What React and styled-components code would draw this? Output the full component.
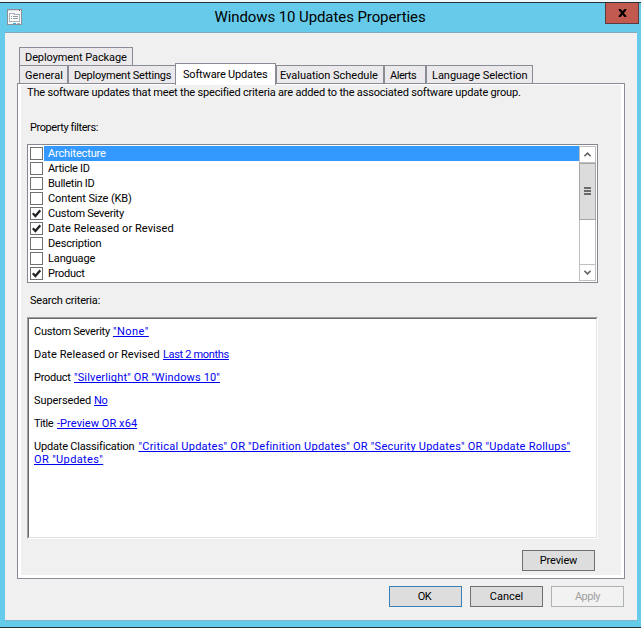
import React from 'react';
import styled, { createGlobalStyle } from 'styled-components';

const Global = createGlobalStyle`
  * { box-sizing: border-box; }
  body { margin: 0; background: #fff; }
`;

const Dialog = styled.div`
  width: 641px;
  height: 628px;
  background: #66cbea;
  border-top: 2px solid #f0f7fa;
  border-bottom: 1px solid #263238;
  font: 11px/13px Roboto, "Liberation Sans", sans-serif;
  color: #000;
  display: flex;
  flex-direction: column;
`;

const TitleBar = styled.header`
  height: 30px;
  flex: none;
  border-top: 1px solid #263238;
  padding: 0 2px 0 7px;
  display: grid;
  grid-template-columns: 28px 1fr 34px;
  align-items: start;
`;

const AppIcon = styled.svg`
  display: block;
  margin-top: 6px;
`;

const Title = styled.h1`
  margin: 5px 0 0;
  font-size: 15px;
  font-weight: 400;
  line-height: 19px;
  letter-spacing: -0.087px;
  text-align: center;
`;

const CloseButton = styled.button`
  width: 34px;
  height: 21px;
  padding: 0;
  border: 1px solid #5c3b40;
  border-top: 0;
  background: #c35a50;
  display: grid;
  place-items: center;
`;

const Client = styled.main`
  margin: 0 4px 0 5px;
  height: 589px;
  background: #f0f0f0;
  border-top: 1px solid #7fa9bd;
  border-bottom: 1px solid #7fb4cc;
  padding: 14px 12px 0;
`;

const TabRow = styled.div`
  display: flex;
  align-items: flex-end;
  height: 18px;
  margin-left: 2px;
`;

const Tab = styled.div`
  flex: none;
  width: ${p => p.$w}px;
  height: ${p => (p.$active ? 22 : 18)}px;
  margin: ${p => (p.$active ? '0 0 -2px -1px' : '0')};
  padding: ${p => (p.$active ? '4px 0 0' : '3px 0 0')} ${p => p.$pad ?? 5}px;
  background: ${p => (p.$active ? '#fff' : '#ebe9eb')};
  border: 1px solid #898c95;
  border-bottom: 0;
  position: relative;
  z-index: ${p => (p.$active ? 1 : 0)};
  white-space: nowrap;
  letter-spacing: ${p => p.$ls}px;
`;

const Panel = styled.section`
  width: 608px;
  height: 496px;
  border: 1px solid #898c95;
  background: #f0f0f0;
  box-shadow: inset 3px 0 #fff, inset -3px 0 #fff, inset 0 -3px #fff, inset 0 1px #fff;
  padding: 2px 0 0 9px;
  display: flex;
  flex-direction: column;
`;

const Label = styled.p`
  margin: ${p => p.$m};
  white-space: nowrap;
  letter-spacing: ${p => p.$ls}px;
`;

const ListBox = styled.div`
  width: 571px;
  height: 139px;
  flex: none;
  border: 1px solid #828790;
  background: #fff;
  padding: 1px;
  display: flex;
`;

const Options = styled.ul`
  flex: 1;
  margin: 0;
  padding: 0 0 0 1px;
  list-style: none;
`;

const Option = styled.li`
  display: flex;
  align-items: flex-start;
  height: 15px;
  letter-spacing: ${p => p.$ls}px;
`;

const Check = styled.span`
  width: 13px;
  height: 13px;
  margin: 1px 1px 0 0;
  border: 1px solid #707070;
  background: #fff;
  display: grid;
  place-items: center;
`;

const OptionText = styled.span`
  flex: 1;
  height: 15px;
  padding: 1px 0 0 4px;
  background: ${p => (p.$on ? '#3399ff' : 'transparent')};
  color: ${p => (p.$on ? '#fff' : '#000')};
`;

const ScrollBar = styled.div`
  width: 17px;
  height: 135px;
  border: 1px solid #bfbfbf;
  display: flex;
  flex-direction: column;
  justify-content: space-between;
`;

const Arrow = styled.div`
  height: 16px;
  display: grid;
  place-items: center;
  border-${p => p.$edge}: 1px solid #bfbfbf;
`;

const Thumb = styled.div`
  height: 57px;
  margin: 0 -1px auto;
  padding-bottom: 1px;
  border: 1px solid #a6a6a6;
  background: #dcdcdc;
  display: flex;
  flex-direction: column;
  align-items: center;
  justify-content: center;
  gap: 1px;
`;

const Grip = styled.i`
  width: 7px;
  height: 2px;
  background: #6b6b6b;
`;

const Criteria = styled.div`
  width: 571px;
  height: 222px;
  flex: none;
  border: 1px solid;
  border-color: #a0a0a0 #fff #fff #a0a0a0;
  background: #fff;
`;

const CriteriaInner = styled.div`
  height: 220px;
  border: 1px solid;
  border-color: #696969 #e3e3e3 #e3e3e3 #696969;
  padding: 6px 0 0 5px;
  display: flex;
  flex-direction: column;
  gap: 10px;
`;

const Criterion = styled.p`
  margin: 0;
  white-space: nowrap;
  display: grid;
  grid-template-columns: ${p => p.$col}px max-content;
`;

const Term = styled.span`
  letter-spacing: ${p => p.$ls}px;
`;

const Link = styled.a`
  color: #0000f0;
  text-decoration: underline 1px;
  text-underline-offset: 1px;
  text-decoration-skip-ink: none;
  letter-spacing: ${p => p.$ls}px;
  grid-column: ${p => (p.$wrap ? '1 / -1' : 'auto')};
`;

const Button = styled.button`
  width: 73px;
  height: 21px;
  padding: 0 ${p => (p.$primary ? 2 : 0)}px 0 0;
  font: inherit;
  letter-spacing: ${p => p.$ls}px;
  color: ${p => (p.disabled ? '#a0a0a0' : '#000')};
  background: ${p => (p.disabled ? '#f2f2f2' : '#dddddd')};
  border: 1px solid ${p => (p.disabled ? '#adb2b5' : p.$primary ? '#3a7fb5' : '#707070')};
`;

const PanelActions = styled.div`
  display: flex;
  margin: 11px 0 0 495px;
`;

const Footer = styled.footer`
  display: flex;
  justify-content: flex-end;
  gap: 8px;
  margin: 7px 1px 0 0;
`;

const OPTIONS = [
  ['Architecture', -0.159, false, true],
  ['Article ID', -0.308],
  ['Bulletin ID', -0.26],
  ['Content Size (KB)', -0.12],
  ['Custom Severity', -0.25, true],
  ['Date Released or Revised', 0.08, true],
  ['Description', -0.2],
  ['Language', -0.122],
  ['Product', -0.25, true],
];

const CRITERIA = [
  { term: 'Custom Severity', ls: -0.25, col: 79, links: [['"None"', 0.469]] },
  { term: 'Date Released or Revised', ls: 0.08, col: 129, links: [['Last 2 months', -0.33]] },
  { term: 'Product', ls: -0.25, col: 40, links: [['"Silverlight" OR "Windows 10"', 0.144]] },
  { term: 'Superseded', ls: -0.09, col: 60, links: [['No', -0.28]] },
  { term: 'Title', ls: -0.45, col: 23, links: [['-Preview OR x64', 0.07]] },
  {
    term: 'Update Classification',
    ls: -0.19,
    col: 104.5,
    links: [
      ['"Critical Updates" OR "Definition Updates" OR "Security Updates" OR "Update Rollups"', 0.235],
      ['OR "Updates"', 0.374],
    ],
  },
];

export default function App() {
  return (
    <Dialog>
      <Global />
      <TitleBar>
        <AppIcon width="15" height="16" viewBox="0 0 15 16" shapeRendering="crispEdges">
          <path d="M0 0h15v16H0z" fill="#8c8f96" />
          <path d="M1 1h13v14H1z" fill="#fafafa" />
          <path d="M1 1h12v1H1z" fill="#dcdfe3" />
          <path d="M12 1h1v1h-1z" fill="#4a5056" />
          <path d="M2.5 4.5h5v1h5v7h-10z" fill="#fff" stroke="#a9afb9" />
          <path d="M4 7h1v1H4zM6 7h5v1H6zM4 9h1v1H4zM6 9h5v1H6z" fill="#8f97a3" />
          <path d="M6 14h3v1H6z" fill="#35b0dc" />
          <path d="M10 14h3v1h-3z" fill="#a9b0b6" />
        </AppIcon>
        <Title>Windows 10 Updates Properties</Title>
        <CloseButton aria-label="Close">
          <svg width="9" height="8" viewBox="0 0 9 8">
            <path d="M1.2 0L7.8 8M7.8 0L1.2 8" stroke="#000" strokeWidth="2.2" />
          </svg>
        </CloseButton>
      </TitleBar>
      <Client>
        <TabRow>
          <Tab $w={114} $ls={-0.089}>Deployment Package</Tab>
        </TabRow>
        <TabRow>
          <Tab $w={49} $ls={0.086}>General</Tab>
          <Tab $w={108} $ls={-0.22}>Deployment Settings</Tab>
          <Tab $w={101} $ls={-0.172} $pad={7} $active>Software Updates</Tab>
          <Tab $w={108} $ls={-0.028} $pad={3}>Evaluation Schedule</Tab>
          <Tab $w={42} $ls={-0.452}>Alerts</Tab>
          <Tab $w={107} $ls={-0.034}>Language Selection</Tab>
        </TabRow>
        <Panel>
          <Label $m="0" $ls={-0.188}>
            The software updates that meet the specified criteria are added to the associated software update group.
          </Label>
          <Label $m="22px 0 10px 3px" $ls={-0.421}>Property filters:</Label>
          <ListBox>
            <Options>
              {OPTIONS.map(([name, ls, checked, selected]) => (
                <Option key={name} $ls={ls}>
                  <Check>
                    {checked && (
                      <svg width="9" height="9" viewBox="0 0 9 9">
                        <path d="M0.8 4.2L3.4 7L8.3 1.3" fill="none" stroke="#222" strokeWidth="2.2" />
                      </svg>
                    )}
                  </Check>
                  <OptionText $on={selected}>{name}</OptionText>
                </Option>
              ))}
            </Options>
            <ScrollBar>
              <Arrow $edge="bottom">
                <svg width="7" height="5" viewBox="0 0 7 5">
                  <path d="M0.4 4.2L3.5 1.1L6.6 4.2" fill="none" stroke="#606060" strokeWidth="1.5" />
                </svg>
              </Arrow>
              <Thumb>
                <Grip />
                <Grip />
                <Grip />
              </Thumb>
              <Arrow $edge="top">
                <svg width="7" height="5" viewBox="0 0 7 5">
                  <path d="M0.4 0.8L3.5 3.9L6.6 0.8" fill="none" stroke="#606060" strokeWidth="1.5" />
                </svg>
              </Arrow>
            </ScrollBar>
          </ListBox>
          <Label $m="11px 0 10px 3px" $ls={-0.19}>Search criteria:</Label>
          <Criteria>
            <CriteriaInner>
              {CRITERIA.map(c => (
                <Criterion key={c.term} $col={c.col}>
                  <Term $ls={c.ls}>{c.term}</Term>
                  {c.links.map(([text, ls], i) => (
                    <Link key={text} $ls={ls} $wrap={i > 0}>{text}</Link>
                  ))}
                </Criterion>
              ))}
            </CriteriaInner>
          </Criteria>
          <PanelActions>
            <Button $ls={-0.152}>Preview</Button>
          </PanelActions>
        </Panel>
        <Footer>
          <Button $primary $ls={-0.44}>OK</Button>
          <Button $ls={-0.014}>Cancel</Button>
          <Button disabled $ls={-0.433}>Apply</Button>
        </Footer>
      </Client>
    </Dialog>
  );
}
